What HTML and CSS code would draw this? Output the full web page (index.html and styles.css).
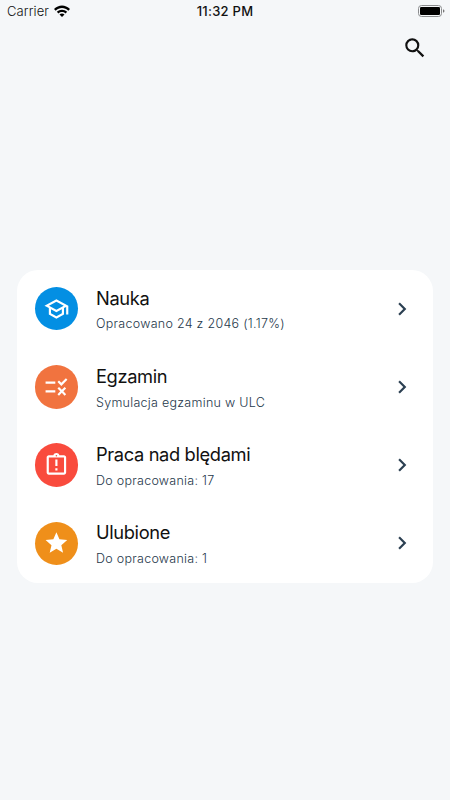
FILE: index.html
```html
<!DOCTYPE html>
<html lang="pl">
<head>
<meta charset="utf-8">
<title>Nauka</title>
<link rel="stylesheet" href="styles.css">
</head>
<body>
<header class="status">
  <div class="carrier"><span class="carrier-name">Carrier</span>
    <svg class="wifi" viewBox="0 0 16 12"><path d="M0 3.9C4.5-.8 11.500-.8 16 3.900L14.300 5.700C10.800 2.200 5.200 2.200 1.700 5.700Z"/><path d="M2.800 6.800C5.700 3.900 10.300 3.900 13.200 6.800L11.500 8.500C9.600 6.600 6.400 6.600 4.500 8.500Z"/><path d="M5.500 9.500C6.900 8.200 9.100 8.200 10.500 9.500L8 12Z"/></svg>
  </div>
  <time class="clock">11:32 PM</time>
  <svg class="battery" viewBox="0 0 27 12"><rect class="battery-shell" x=".5" y=".5" width="23" height="11" rx="3"/><rect x="2" y="2" width="20" height="8" rx="1.300"/><path class="battery-tip" d="M25 4.200q1.500.6 1.500 1.800t-1.500 1.800z"/></svg>
</header>
<div class="toolbar">
  <svg class="icon" viewBox="0 0 24 24"><path d="M15.5 14h-.79l-.28-.27A6.471 6.471 0 0 0 16 9.500 6.500 6.500 0 1 0 9.500 16c1.610 0 3.090-.59 4.230-1.570l.27.28v.79l5 4.990L20.490 19l-4.990-5zm-6 0C7.010 14 5 11.990 5 9.500S7.010 5 9.500 5 14 7.010 14 9.500 11.990 14 9.500 14z"/></svg>
</div>
<main class="card">
  <a class="row">
    <span class="badge blue"><svg class="icon" viewBox="0 0 24 24"><path d="M12 3L1 9l4 2.180v6L12 21l7-3.820v-6l2-1.090V17h2V9L12 3zm6.820 6L12 12.720 5.180 9 12 5.280 18.820 9zM17 15.990l-5 2.730-5-2.730v-3.720L12 15l5-2.730v3.720z"/></svg></span>
    <span class="text"><span class="title">Nauka</span><span class="sub">Opracowano 24 z 2046 (1.17%)</span></span>
    <svg class="icon chevron" viewBox="0 0 24 24"><path d="M10 6L8.590 7.410 13.170 12l-4.580 4.590L10 18l6-6z"/></svg>
  </a>
  <a class="row">
    <span class="badge orange"><svg class="icon" viewBox="0 0 24 24"><path d="M16.540 11L13 7.460l1.410-1.410 2.120 2.120 4.240-4.240 1.410 1.410L16.540 11zM11 7H2v2h9V7zm10 6.410L19.590 12 17 14.590 14.410 12 13 13.410 15.590 16 13 18.590 14.410 20 17 17.410 19.590 20 21 18.590 18.410 16 21 13.410zM11 15H2v2h9v-2z"/></svg></span>
    <span class="text"><span class="title">Egzamin</span><span class="sub">Symulacja egzaminu w ULC</span></span>
    <svg class="icon chevron" viewBox="0 0 24 24"><path d="M10 6L8.590 7.410 13.170 12l-4.580 4.590L10 18l6-6z"/></svg>
  </a>
  <a class="row">
    <span class="badge red"><svg class="icon" viewBox="0 0 24 24"><path d="M11 15h2v2h-2v-2zm0-8h2v6h-2V7zm8-4h-4.180C14.400 1.840 13.300 1 12 1s-2.400.84-2.820 2H5c-1.100 0-2 .9-2 2v14c0 1.100.9 2 2 2h14c1.100 0 2-.9 2-2V5c0-1.100-.9-2-2-2zm-7-.25c.41 0 .75.34.75.75s-.34.75-.75.75-.75-.34-.75-.75.34-.75.75-.75zM19 19H5V5h14v14z"/></svg></span>
    <span class="text"><span class="title">Praca nad blędami</span><span class="sub">Do opracowania: 17</span></span>
    <svg class="icon chevron" viewBox="0 0 24 24"><path d="M10 6L8.590 7.410 13.170 12l-4.580 4.590L10 18l6-6z"/></svg>
  </a>
  <a class="row">
    <span class="badge amber"><svg class="icon" viewBox="0 0 24 24"><path d="M12 17.270L18.180 21l-1.640-7.030L22 9.240l-7.190-.61L12 2 9.190 8.630 2 9.240l5.460 4.730L5.820 21z"/></svg></span>
    <span class="text"><span class="title">Ulubione</span><span class="sub">Do opracowania: 1</span></span>
    <svg class="icon chevron" viewBox="0 0 24 24"><path d="M10 6L8.590 7.410 13.170 12l-4.580 4.590L10 18l6-6z"/></svg>
  </a>
</main>
</body>
</html>
```
FILE: styles.css
```css
* { box-sizing: border-box; }
body {
  margin: 0;
  height: 800px;
  overflow: hidden;
  background: #f5f7f9;
  color: #111;
  font-family: Inter, "Liberation Sans", sans-serif;
}
.status {
  height: 22px;
  padding: 0 5px 0 7px;
  display: grid;
  grid-template-columns: 1fr auto 1fr;
  align-items: center;
  font-size: 13px;
  line-height: 22px;
}
.carrier { display: flex; align-items: center; gap: 5px; }
.carrier-name { font-weight: 360; letter-spacing: .08px; }
.wifi { width: 16px; height: 12px; }
.clock { font-weight: 500; letter-spacing: .25px; margin-left: -2px; }
.battery { width: 27px; height: 12px; justify-self: end; }
.battery-shell { fill: none; stroke: #8b8c8e; }
.battery-tip { fill: #777; }
.toolbar {
  height: 51px;
  padding-right: 22px;
  display: flex;
  align-items: center;
  justify-content: flex-end;
}
.icon { display: block; width: 26px; height: 26px; fill: currentColor; }
.card {
  margin: 196.500px 17px 0;
  height: 313px;
  background: #fff;
  border-radius: 21px;
}
.row {
  height: 78.250px;
  padding: 0 18px 0 17.700px;
  display: flex;
  align-items: center;
}
.badge {
  width: 43.400px;
  height: 43.400px;
  border-radius: 50%;
  display: grid;
  place-items: center;
  color: #fff;
}
.badge .icon { transform: translateX(.4px); }
.blue { background: #038fe3; }
.orange { background: #f1733f; }
.red { background: #f94b3d; }
.amber { background: #ef8f1a; }
.text {
  flex: 1;
  margin-left: 17.900px;
  padding-top: 5.700px;
  display: flex;
  flex-direction: column;
  white-space: nowrap;
}
.title { font-size: 18.300px; line-height: 25px; font-weight: 370; letter-spacing: -.36px; }
.sub { padding-top: .8px; font-size: 12.500px; line-height: 26px; font-weight: 360; letter-spacing: .28px; color: #26384b; }
.chevron { color: #2c4052; }
```
